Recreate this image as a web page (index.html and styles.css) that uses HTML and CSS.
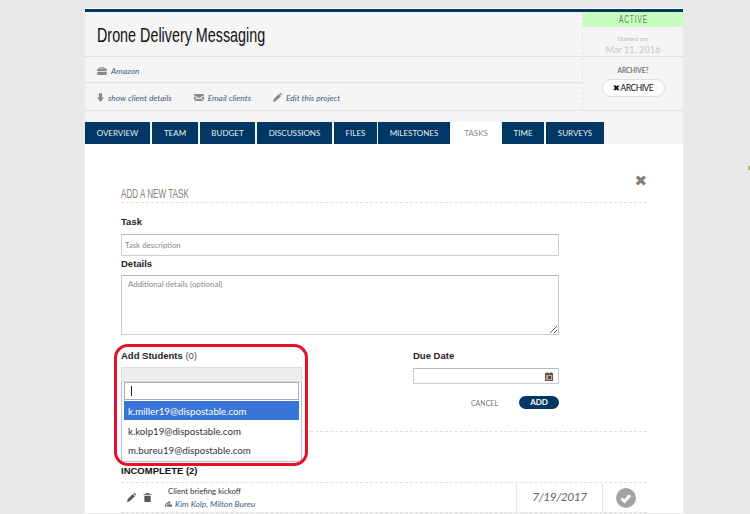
FILE: index.html
```html
<!DOCTYPE html>
<html lang="en">
<head>
<meta charset="UTF-8" />
<meta name="viewport" content="width=device-width, initial-scale=1" />
<title>Drone Delivery Messaging</title>
<link rel="stylesheet" href="styles.css">
</head>
<body>
  <div class="page">
    <header class="project">
      <div class="project-main">
        <div class="title-row"><h1><span class="squeeze">Drone Delivery Messaging</span></h1></div>
        <div class="client-row">
          <svg class="ico ico-case" viewBox="0 0 12 10"><path fill="#8a8a8a" d="M0 3.2C0 2.500.5 2 1.200 2H3V1c0-.6.4-1 1-1h4c.6 0 1 .4 1 1v1h1.800c.7 0 1.200.5 1.200 1.200V5H0zM0 5.800h12V9c0 .6-.4 1-1 1H1c-.6 0-1-.4-1-1zM4 1v1h4V1z"/></svg>
          <a class="link" href="#">Amazon</a>
        </div>
        <div class="links-row">
          <span class="action">
            <svg class="ico ico-arrow" viewBox="0 0 8 10"><path fill="#8a8a8a" d="M2.200 0h3.600v5H8L4 10 0 5h2.200z"/></svg>
            <a class="link" href="#">show client details</a>
          </span>
          <span class="action">
            <svg class="ico ico-mail" viewBox="0 0 10 7"><path fill="#8a8a8a" d="M0 0h10v1.300L5 4 0 1.300zM0 2.300l3 1.600L0 6zM10 2.300 7 3.900l3 2.100zM3.800 4.400 5 5l1.200-.6L10 7H0z"/></svg>
            <a class="link" href="#">Email clients</a>
          </span>
          <span class="action">
            <svg class="ico ico-pencil" viewBox="0 0 10 10"><path fill="#8a8a8a" d="M0 10l.7-3L6.500 1.200 8.800 3.500 3 9.300zM7.200.5 7.700 0c.3-.2.6-.2.9 0L10 1.400c.2.300.2.6 0 .9l-.5.5z"/></svg>
            <a class="link" href="#">Edit this project</a>
          </span>
        </div>
      </div>
      <aside class="project-side">
        <div class="status"><span class="squeeze">ACTIVE</span></div>
        <div class="started">
          <small>Started on:</small>
          <span>Mar 11, 2016</span>
        </div>
        <div class="archive">
          <small>ARCHIVE?</small>
          <button class="archive-btn" type="button"><span class="x">✖</span>ARCHIVE</button>
        </div>
      </aside>
    </header>

    <nav class="tabs">
      <a class="tab tab-overview" href="#">OVERVIEW</a>
      <a class="tab tab-team" href="#">TEAM</a>
      <a class="tab tab-budget" href="#">BUDGET</a>
      <a class="tab tab-discussions" href="#">DISCUSSIONS</a>
      <a class="tab tab-files" href="#">FILES</a>
      <a class="tab tab-milestones" href="#">MILESTONES</a>
      <a class="tab tab-tasks active" href="#">TASKS</a>
      <a class="tab tab-time" href="#">TIME</a>
      <a class="tab tab-surveys" href="#">SURVEYS</a>
    </nav>

    <main class="panel">
      <section class="new-task">
        <span class="close">✖</span>
        <h2><span class="squeeze">ADD A NEW TASK</span></h2>
        <div class="form-body">
          <label class="label">Task</label>
          <input class="field task-field" type="text" placeholder="Task description">
          <label class="label details-label">Details</label>
          <textarea class="field details-field" placeholder="Additional details (optional)"></textarea>
          <div class="form-cols">
            <div class="students-col">
              <label class="label">Add Students <span class="count">(0)</span></label>
              <div class="chosen">
                <div class="chosen-top"></div>
                <div class="chosen-drop">
                  <div class="chosen-search"><i class="caret"></i></div>
                  <ul>
                    <li class="on">k.miller19@dispostable.com</li>
                    <li>k.kolp19@dispostable.com</li>
                    <li>m.bureu19@dispostable.com</li>
                  </ul>
                </div>
              </div>
              <div class="red-mark"></div>
            </div>
            <div class="due-col">
              <label class="label">Due Date</label>
              <div class="field date-field">
                <svg class="ico-cal" viewBox="0 0 8 9"><path fill="#555" d="M0 1h1.500V0h1v1h3V0h1v1H8v8H0z"/><path fill="#c9a27e" d="M1 3h6v5H1z"/><path fill="#555" d="M3 4h3v3H3z"/></svg>
              </div>
              <div class="form-actions">
                <a class="cancel" href="#">CANCEL</a>
                <button class="add-btn" type="button">ADD</button>
              </div>
            </div>
          </div>
        </div>
      </section>

      <section class="task-list">
        <h3>INCOMPLETE (2)</h3>
        <div class="task-row">
          <div class="task-tools">
            <svg class="tool" viewBox="0 0 10 10"><path fill="#555" d="M0 10l.7-3L6.500 1.200 8.800 3.500 3 9.300zM7.200.5 7.700 0c.3-.2.6-.2.9 0L10 1.400c.2.300.2.6 0 .9l-.5.5z"/></svg>
            <svg class="tool" viewBox="0 0 9 10"><path fill="#555" d="M3 0h3l.5 1H9v1H0V1h2.500zM1 3h7v6c0 .6-.4 1-1 1H2c-.6 0-1-.4-1-1z"/></svg>
          </div>
          <div class="task-info">
            <div class="task-name">Client briefing kickoff</div>
            <div class="task-people">
              <svg class="ico-users" viewBox="0 0 10 8"><path fill="#777" d="M6 0a1.800 1.800 0 1 1 0 3.600A1.800 1.800 0 0 1 6 0zM2.800 1.500a1.300 1.300 0 1 1 0 2.600 1.300 1.300 0 0 1 0-2.600zM3 4.200h6c.6 0 1 .4 1 1V8H3zM0 5c0-.4.300-.6.700-.6H2V8H0z"/></svg>
              <a class="link" href="#">Kim Kolp, Milton Bureu</a>
            </div>
          </div>
          <div class="task-date">7/19/2017</div>
          <div class="task-check">
            <svg viewBox="0 0 20 20"><circle cx="10" cy="10" r="10" fill="#a3a3a3"/><path fill="none" stroke="#fff" stroke-width="3" d="M5.500 10.500l3 2.800 5.500-6"/></svg>
          </div>
        </div>
      </section>
    </main>
  </div>
  <i class="speck"></i>
</body>
</html>
```

FILE: styles.css
```css
html, body {
  height: 514px;
  overflow: hidden;
}
body {
  margin: 0;
  background: #e9e9e9;
  font-family: 'Lato', sans-serif;
  color: #222;
}
.page {
  width: 598px;
  margin: 8px 0 0 85px;
  border-top: 1px solid #fff;
  background: #f5f5f5;
}
.link {
  color: #3d5c7a;
  font-style: italic;
  text-decoration: none;
  font-size: 8.400px;
}
/* no condensed face installed, so the headline type is narrowed by hand */
.squeeze {
  display: inline-block;
  white-space: nowrap;
}

/* project header */
.project {
  display: flex;
  height: 98px;
  border-top: 3px solid #003764;
  border-bottom: 1px solid #e2e2e2;
}
.project-main {
  flex: 1;
}
.title-row {
  box-sizing: border-box;
  height: 45px;
  border-bottom: 1px solid #e2e2e2;
  display: flex;
  align-items: center;
  padding: 2px 0 0 12px;
}
h1 {
  margin: 0;
  font-family: 'Liberation Sans', sans-serif;
  font-weight: 400;
  font-size: 21px;
  color: #111;
}
h1 .squeeze {
  transform: scaleX(0.683);
  transform-origin: left center;
}
.client-row {
  box-sizing: border-box;
  height: 26px;
  border-bottom: 1px solid #e2e2e2;
  display: flex;
  align-items: center;
  padding: 2px 0 0 12px;
  gap: 4px;
}
.links-row {
  box-sizing: border-box;
  height: 27px;
  display: flex;
  align-items: center;
  padding: 2px 0 0 12px;
  gap: 22px;
}
.action {
  display: flex;
  align-items: center;
  gap: 4px;
}
.ico { display: block; }
.ico-case { width: 10px; height: 8px; }
.ico-arrow { width: 7px; height: 9px; }
.ico-mail { width: 10px; height: 7px; }
.ico-pencil { width: 9px; height: 9px; }
.project-side {
  width: 101px;
  border-left: 1px dashed #e2e2e2;
  box-sizing: border-box;
  display: flex;
  flex-direction: column;
}
.status {
  height: 15px;
  background: #c6ffbe;
  text-align: center;
  font-family: 'Liberation Sans', sans-serif;
  font-size: 10.500px;
  line-height: 15px;
  letter-spacing: 1.500px;
  color: #6b7a68;
}
.status .squeeze {
  transform: scaleX(0.62);
}
.started {
  height: 29px;
  border-bottom: 1px solid #e2e2e2;
  text-align: center;
}
.started small {
  display: block;
  margin-top: 8px;
  font-size: 6.500px;
  line-height: 8px;
  color: #bbb;
}
.started span {
  display: block;
  font-size: 9.200px;
  line-height: 14px;
  color: #c8c8c8;
}
.archive {
  text-align: center;
}
.archive small {
  display: block;
  margin-top: 9px;
  font-size: 6.500px;
  font-weight: 700;
  line-height: 9px;
  color: #777;
}
.archive-btn {
  display: block;
  width: 63px;
  height: 18px;
  margin: 4px auto 0 auto;
  padding: 0;
  background: #fff;
  border: 1px solid #ddd;
  border-radius: 9px;
  font-family: 'Lato', sans-serif;
  font-size: 8.500px;
  letter-spacing: -0.500px;
  color: #111;
}
.archive-btn .x {
  font-family: 'DejaVu Sans', sans-serif;
  font-size: 8.500px;
  margin-right: 1px;
}

/* tabs */
.tabs {
  display: flex;
  gap: 2px;
  height: 22px;
  padding-top: 11px;
}
.tab {
  display: block;
  box-sizing: border-box;
  height: 22px;
  line-height: 22px;
  background: #003764;
  color: #e8eef3;
  font-size: 8px;
  text-align: center;
  text-decoration: none;
}
.tab.active {
  background: #fff;
  color: #888;
}
.tab-overview { width: 65px; }
.tab-team { width: 46px; }
.tab-budget { width: 55px; }
.tab-discussions { width: 75px; }
.tab-files { width: 43px; }
.tab-milestones { width: 72px; margin-left: -1px; }
.tab-tasks { width: 50px; margin-left: -1px; margin-right: -1px; }
.tab-time { width: 42px; }
.tab-surveys { width: 58px; }

/* task form */
.panel {
  background: #fff;
  padding: 0 36px;
}
.new-task {
  position: relative;
  padding-top: 44px;
}
.close {
  position: absolute;
  top: 27px;
  right: 0;
  font-family: 'DejaVu Sans', sans-serif;
  font-size: 15px;
  line-height: 20px;
  color: #7f7f7f;
}
h2 {
  margin: 0;
  padding-bottom: 1px;
  border-bottom: 1px dashed #e0e0e0;
  font-family: 'Liberation Sans', sans-serif;
  font-weight: 400;
  font-size: 12.500px;
  line-height: 13px;
  color: #8a7f74;
}
h2 .squeeze {
  transform: scaleX(0.65);
  transform-origin: left center;
}
.form-body {
  padding-top: 13px;
  height: 215px;
  border-bottom: 1px dashed #e0e0e0;
}
.label {
  display: block;
  font-family: 'Liberation Sans', sans-serif;
  font-weight: 700;
  font-size: 9.500px;
  line-height: 12px;
  color: #222;
}
.count {
  font-weight: 400;
  color: #555;
}
.field {
  display: block;
  box-sizing: border-box;
  width: 438px;
  border: 1px solid #ccc;
  border-top-color: #bbb;
  background: #fff;
  font-family: 'Lato', sans-serif;
  font-size: 7.900px;
  outline: none;
  border-radius: 0;
}
.field::placeholder { color: #888; }
.task-field {
  height: 22px;
  margin-top: 6px;
  padding: 0 3px;
}
.details-label { margin-top: 2px; }
.details-field {
  height: 60px;
  margin-top: 5px;
  padding: 3px 6px;
}
.form-cols {
  display: flex;
  margin-top: 15px;
}
.students-col {
  position: relative;
  width: 292px;
}
.chosen {
  position: relative;
  width: 181px;
  margin-top: 5px;
}
.chosen-top {
  height: 15px;
  box-sizing: border-box;
  background: #eee;
  border: 1px solid #ddd;
}
.chosen-drop {
  position: absolute;
  top: 15px;
  left: 0;
  width: 181px;
  box-sizing: border-box;
  height: 80px;
  padding: 0 2px;
  background: #fff;
  border: 1px solid #a9c0e8;
  border-top: 0;
  border-radius: 0 0 3px 3px;
}
.chosen-search {
  box-sizing: border-box;
  height: 18px;
  border: 1px solid #aaa;
  background: #fff;
  padding: 3px 6px;
}
.caret {
  display: block;
  width: 1px;
  height: 10px;
  background: #222;
}
.chosen-drop ul {
  list-style: none;
  margin: 1px 0 0 0;
  padding: 0;
}
.chosen-drop li {
  height: 19px;
  line-height: 21px;
  padding-left: 4px;
  font-size: 9.700px;
  color: #333;
}
.chosen-drop li.on {
  background: #3875d7;
  color: #fff;
  margin-bottom: 1px;
}
.red-mark {
  position: absolute;
  left: -7px;
  top: -6px;
  width: 194px;
  height: 122px;
  box-sizing: border-box;
  border: 3px solid #e81123;
  border-radius: 14px;
}
.due-col {
  width: 146px;
}
.date-field {
  width: 146px;
  height: 16px;
  margin-top: 6px;
  position: relative;
}
.ico-cal {
  position: absolute;
  right: 5px;
  top: 3px;
  width: 8px;
  height: 9px;
}
.form-actions {
  display: flex;
  align-items: center;
  justify-content: flex-end;
  margin-top: 12px;
}
.cancel {
  font-size: 7px;
  color: #777;
  text-decoration: none;
  margin-right: 21px;
}
.add-btn {
  width: 40px;
  height: 13px;
  padding: 0;
  border: 0;
  border-radius: 7px;
  background: #003764;
  color: #fff;
  font-family: 'Lato', sans-serif;
  font-weight: 700;
  font-size: 8px;
  line-height: 13px;
}

/* task list */
.task-list {
  padding-top: 33px;
}
h3 {
  margin: 0 0 6px 0;
  font-family: 'Liberation Sans', sans-serif;
  font-size: 9.500px;
  line-height: 11px;
  color: #111;
}
.task-row {
  display: flex;
  height: 29px;
  border-top: 1px dashed #e0e0e0;
  border-bottom: 1px dashed #e0e0e0;
}
.task-tools {
  width: 47px;
  display: flex;
  align-items: center;
  gap: 7px;
  padding-left: 6px;
  box-sizing: border-box;
}
.tool {
  width: 9px;
  height: 9px;
}
.task-info {
  width: 348px;
  padding-top: 3px;
}
.task-name {
  font-size: 7.800px;
  line-height: 11px;
  color: #333;
}
.task-people {
  display: flex;
  align-items: center;
  gap: 3px;
  margin-top: 2px;
  margin-left: -3px;
}
.ico-users {
  width: 7px;
  height: 6px;
}
.task-date {
  width: 87px;
  border-left: 1px solid #e6e6e6;
  border-right: 1px solid #e6e6e6;
  box-sizing: border-box;
  text-align: center;
  font-size: 12px;
  font-style: italic;
  letter-spacing: -0.500px;
  line-height: 28px;
  color: #666;
}
.task-check {
  flex: 1;
  display: flex;
  align-items: center;
  padding-left: 13px;
}
.task-check svg {
  width: 20px;
  height: 20px;
}
.speck {
  position: absolute;
  left: 748px;
  top: 166px;
  width: 2px;
  height: 4px;
  background: #a5c060;
}
```
